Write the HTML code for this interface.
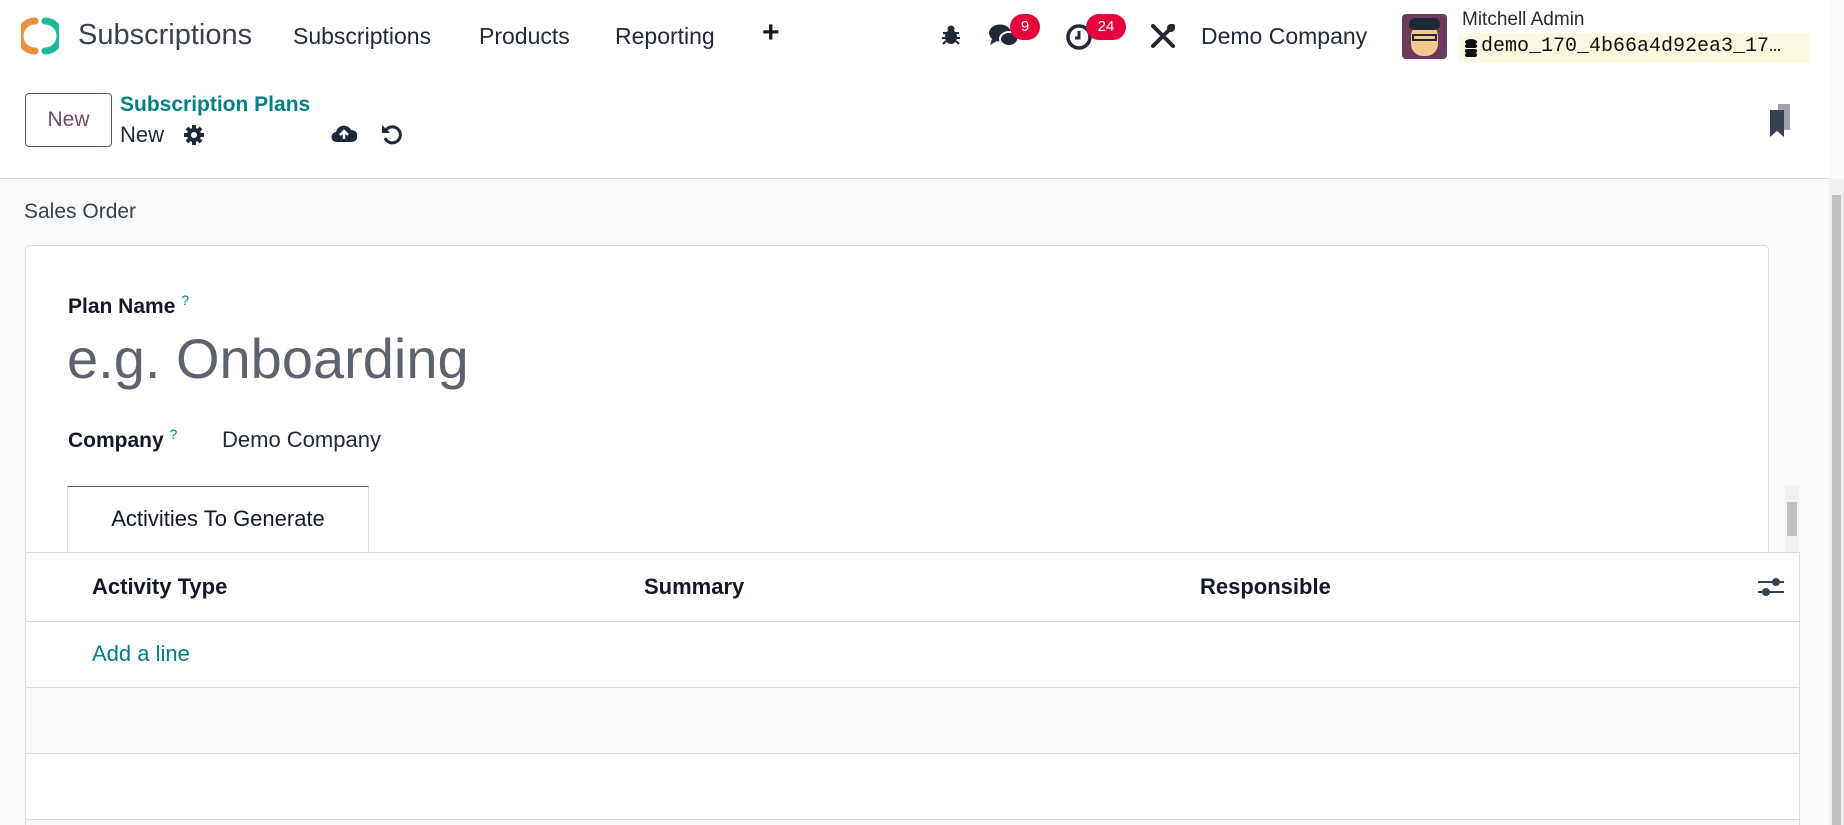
<!DOCTYPE html>
<html style="height:825px;overflow:hidden"><head><meta charset="utf-8"><style>
*{box-sizing:border-box;margin:0;padding:0}
body{width:1844px;height:825px;overflow:hidden;background:#f9fafb;font-family:"Liberation Sans",sans-serif;color:#111827;position:relative}
.a{position:absolute;white-space:nowrap}
.top{position:absolute;left:0;top:0;width:1829px;height:179px;background:#fff;border-bottom:1px solid #d8dadd}
.nav{font-size:23px;color:#1f2937}
.badge{position:absolute;background:#e6003c;color:#fff;font-size:15px;border-radius:13px;height:26px;line-height:26px;text-align:center}
.card{position:absolute;left:25px;top:245px;width:1744px;height:580px;background:#fff;border:1px solid #d8dadd;border-bottom:none;border-radius:5px 5px 0 0}
.hr{position:absolute;left:25px;width:1774px;height:1px;background:#d8dadd}
.th{font-size:22px;font-weight:bold;color:#111827}
</style></head><body>
<div class="top"></div>
<svg class="a" style="left:21px;top:16px" width="38" height="40" viewBox="0 0 38 40"><path d="M14 5 A15 15 0 0 0 14 35" fill="none" stroke="#e8913f" stroke-width="7" stroke-linecap="round"/><path d="M24 5 A15 15 0 0 1 24 35" fill="none" stroke="#1fb89a" stroke-width="7" stroke-linecap="round"/></svg>
<div class="a" style="left:78px;top:19px;font-size:29px;color:#374151">Subscriptions</div>
<div class="a nav" style="left:293px;top:23px">Subscriptions</div>
<div class="a nav" style="left:479px;top:23px">Products</div>
<div class="a nav" style="left:615px;top:23px">Reporting</div>
<div class="a" style="left:762px;top:16px;font-size:30px;font-weight:bold;color:#111827">+</div>
<svg class="a" style="left:941px;top:24px" width="20" height="22" viewBox="0 0 20 22"><ellipse cx="10" cy="13" rx="6" ry="7" fill="#1f2937"/><circle cx="10" cy="5" r="3.5" fill="#1f2937"/><path d="M2 9h16M1 14h18M2 20l3-3M18 20l-3-3" stroke="#1f2937" stroke-width="2"/></svg>
<svg class="a" style="left:988px;top:22px" width="32" height="28" viewBox="0 0 32 28"><ellipse cx="12" cy="11" rx="11" ry="8.5" fill="#1f2937"/><path d="M4 17l-2 6 7-4z" fill="#1f2937"/><ellipse cx="21" cy="17" rx="9" ry="7" fill="#1f2937" stroke="#fff" stroke-width="2"/></svg>
<div class="badge" style="left:1010px;top:14px;width:30px">9</div>
<svg class="a" style="left:1066px;top:23px" width="28" height="28" viewBox="0 0 28 28"><circle cx="13" cy="14" r="11" fill="none" stroke="#1f2937" stroke-width="3.5"/><path d="M13 8v7h-4" fill="none" stroke="#1f2937" stroke-width="3"/></svg>
<div class="badge" style="left:1086px;top:14px;width:40px">24</div>
<svg class="a" style="left:1150px;top:23px" width="26" height="26" viewBox="0 0 26 26"><path d="M3 3l20 20M23 3L3 23" stroke="#1f2937" stroke-width="4" stroke-linecap="round"/><circle cx="21" cy="5" r="4" fill="#1f2937"/></svg>
<div class="a nav" style="left:1201px;top:23px">Demo Company</div>
<div class="a" style="left:1402px;top:14px;width:45px;height:45px;border-radius:4px;background:#6b3a5c;overflow:hidden"><div style="position:absolute;left:9px;top:10px;width:27px;height:32px;border-radius:12px;background:#f3c98f"></div><div style="position:absolute;left:7px;top:4px;width:31px;height:12px;border-radius:8px;background:#1f2937"></div><div style="position:absolute;left:10px;top:20px;width:25px;height:7px;border:2px solid #1f2937"></div></div>
<div class="a" style="left:1462px;top:9px;font-size:19px;color:#1f2937">Mitchell Admin</div>
<div class="a" style="left:1459px;top:33px;width:350px;height:30px;background:#fbf8e1"></div>
<svg class="a" style="left:1465px;top:39px" width="12" height="18" viewBox="0 0 12 18"><ellipse cx="6" cy="3" rx="6" ry="3" fill="#111"/><rect x="0" y="5" width="12" height="4" rx="2" fill="#111"/><rect x="0" y="10" width="12" height="4" rx="2" fill="#111"/><rect x="0" y="14" width="12" height="4" rx="2" fill="#111"/></svg>
<div class="a" style="left:1481px;top:35px;font-family:'Liberation Mono',monospace;font-size:20px;color:#111">demo_170_4b66a4d92ea3_17…</div>
<div class="a" style="left:25px;top:93px;width:87px;height:54px;border:1px solid #714b67;border-radius:4px;color:#714b67;font-size:21px;text-align:center;line-height:52px">New</div>
<div class="a" style="left:120px;top:93px;font-size:21px;font-weight:bold;color:#017e84">Subscription Plans</div>
<div class="a" style="left:120px;top:122px;font-size:22px;color:#1f2937">New</div>
<svg class="a" style="left:183px;top:124px" width="22" height="22" viewBox="0 0 22 22"><g stroke="#1f2937" stroke-width="4"><path d="M11 1v20M1 11h20M4 4l14 14M18 4L4 18"/></g><circle cx="11" cy="11" r="7" fill="#1f2937"/><circle cx="11" cy="11" r="3" fill="#fff"/></svg>
<svg class="a" style="left:331px;top:122px" width="26" height="22" viewBox="0 0 26 22"><path d="M6 20a5 5 0 0 1-1-10 8 8 0 0 1 15-2 6 6 0 0 1 1 12z" fill="#1f2937"/><path d="M13 17v-7M9 13l4-4 4 4" stroke="#fff" stroke-width="2.5" fill="none"/></svg>
<svg class="a" style="left:380px;top:122px" width="24" height="24" viewBox="0 0 24 24"><path d="M6 8a8 8 0 1 1-1 8" fill="none" stroke="#1f2937" stroke-width="3"/><path d="M2 3v8h8z" fill="#1f2937"/></svg>
<svg class="a" style="left:1770px;top:104px" width="22" height="34" viewBox="0 0 22 34"><rect x="8" y="0" width="12" height="26" fill="#9ca3af"/><path d="M0 6h14v27l-7-6-7 6z" fill="#374151"/></svg>
<div class="a" style="left:1829px;top:179px;width:15px;height:646px;background:#f1f1f1"></div>
<div class="a" style="left:1832px;top:195px;width:9px;height:630px;background:#c1c1c1"></div>
<div class="a" style="left:24px;top:200px;font-size:21px;color:#374151">Sales Order</div>
<div class="card"></div>
<div class="a" style="left:68px;top:292px;font-size:21px;font-weight:bold;color:#111827">Plan Name <sup style="color:#017e84;font-size:14px;font-weight:normal">?</sup></div>
<div class="a" style="left:67px;top:326px;font-size:56px;color:#5d6271">e.g. Onboarding</div>
<div class="a" style="left:68px;top:426px;font-size:21px;font-weight:bold;color:#111827">Company <sup style="color:#017e84;font-size:14px;font-weight:normal">?</sup></div>
<div class="a" style="left:222px;top:427px;font-size:22px;color:#1f2937">Demo Company</div>
<div class="a" style="left:67px;top:486px;width:302px;height:67px;background:#fff;border:1px solid #d8dadd;border-top:1px solid #714b67;border-bottom:none;font-size:22px;color:#111827;text-align:center;line-height:64px">Activities To Generate</div>
<div class="a" style="left:1785px;top:486px;width:14px;height:66px;background:#f1f1f1"></div>
<div class="a" style="left:1787px;top:502px;width:10px;height:34px;background:#c1c1c1"></div>
<div class="a" style="left:25px;top:552px;width:1775px;height:273px;background:#fff;border-left:1px solid #d8dadd;border-right:1px solid #d8dadd"></div>
<div class="hr" style="top:552px"></div>
<div class="a th" style="left:92px;top:574px">Activity Type</div>
<div class="a th" style="left:644px;top:574px">Summary</div>
<div class="a th" style="left:1200px;top:574px">Responsible</div>
<svg class="a" style="left:1758px;top:576px" width="26" height="22" viewBox="0 0 26 22"><path d="M0 6h26M0 16h26" stroke="#374151" stroke-width="2"/><circle cx="18" cy="6" r="4" fill="#374151"/><circle cx="8" cy="16" r="4" fill="#374151"/></svg>
<div class="hr" style="top:621px"></div>
<div class="a" style="left:92px;top:641px;font-size:22px;color:#017e84">Add a line</div>
<div class="hr" style="top:687px"></div>
<div class="a" style="left:26px;top:688px;width:1773px;height:65px;background:#f9f9f9"></div>
<div class="hr" style="top:753px"></div>
<div class="hr" style="top:819px"></div>
<div class="a" style="left:26px;top:820px;width:1773px;height:5px;background:#f9f9f9"></div>
</body></html>
